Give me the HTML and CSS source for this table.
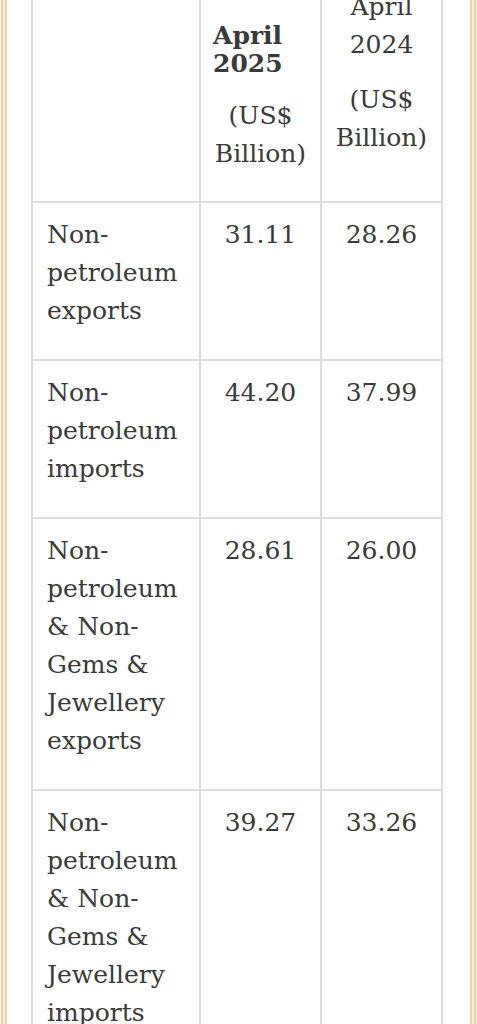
FILE: index.html
```html
<!DOCTYPE html>
<html lang="en">
<head>
<meta charset="utf-8">
<title>Trade data April 2025</title>
<link rel="stylesheet" href="styles.css">
</head>
<body>
<div class="frame">
  <div class="sheet">
    <div class="trade-table" role="table">
      <div class="cell label head" role="columnheader"></div>
      <div class="cell head head-current" role="columnheader">
        <strong class="year-bold">April 2025</strong>
        <p class="unit unit-current">(US$ Billion)</p>
      </div>
      <div class="cell head head-previous" role="columnheader">
        <p class="year-plain">April 2024</p>
        <p class="unit unit-previous">(US$ Billion)</p>
      </div>

      <div class="cell label" role="cell">Non-petroleum exports</div>
      <div class="cell num" role="cell">31.11</div>
      <div class="cell num" role="cell">28.26</div>

      <div class="cell label" role="cell">Non-petroleum imports</div>
      <div class="cell num" role="cell">44.20</div>
      <div class="cell num" role="cell">37.99</div>

      <div class="cell label" role="cell">Non-petroleum &amp; Non-Gems &amp; Jewellery exports</div>
      <div class="cell num" role="cell">28.61</div>
      <div class="cell num" role="cell">26.00</div>

      <div class="cell label" role="cell">Non-petroleum &amp; Non-Gems &amp; Jewellery imports</div>
      <div class="cell num" role="cell">39.27</div>
      <div class="cell num" role="cell">33.26</div>
    </div>
  </div>
</div>
</body>
</html>
```

FILE: styles.css
```css
html, body {
  margin: 0;
  padding: 0;
  background: #ffffff;
}

body {
  font-family: "DejaVu Serif", "Liberation Serif", serif;
  font-size: 25px;
  line-height: 38px;
  color: #3a3a3a;
}

.frame {
  margin: 0 1px;
  min-height: 100vh;
  border-left: 2px solid #f1d2a4;
  border-right: 2px solid #f1d2a4;
  background: #fcecd5;
  padding: 0 2px;
}

.sheet {
  background: #ffffff;
  border-left: 2px solid #f1d2a4;
  border-right: 2px solid #f1d2a4;
  padding: 0 25px 0 24px;
  min-height: 100vh;
}

.trade-table {
  display: grid;
  grid-template-columns: 168px 121px 121px;
  width: 412px;
  margin-top: -26px;
  border-left: 2px solid #dedede;
  border-top: 2px solid #dedede;
}

.cell {
  box-sizing: border-box;
  border-right: 2px solid #dedede;
  border-bottom: 2px solid #dedede;
  padding: 13px 12px 29px;
}

.cell.label {
  padding-left: 14px;
  padding-right: 14px;
}

.cell.num {
  text-align: center;
}

.cell.head {
  padding-top: 12px;
  padding-bottom: 28px;
}

.year-bold {
  display: block;
  margin-top: 34px;
  line-height: 28px;
  font-weight: bold;
  text-align: left;
}

.year-plain {
  margin: 0;
  text-align: center;
}

.unit {
  margin: 0;
  text-align: center;
}

.unit-current {
  margin-top: 19px;
}

.unit-previous {
  margin-top: 17px;
}
```
